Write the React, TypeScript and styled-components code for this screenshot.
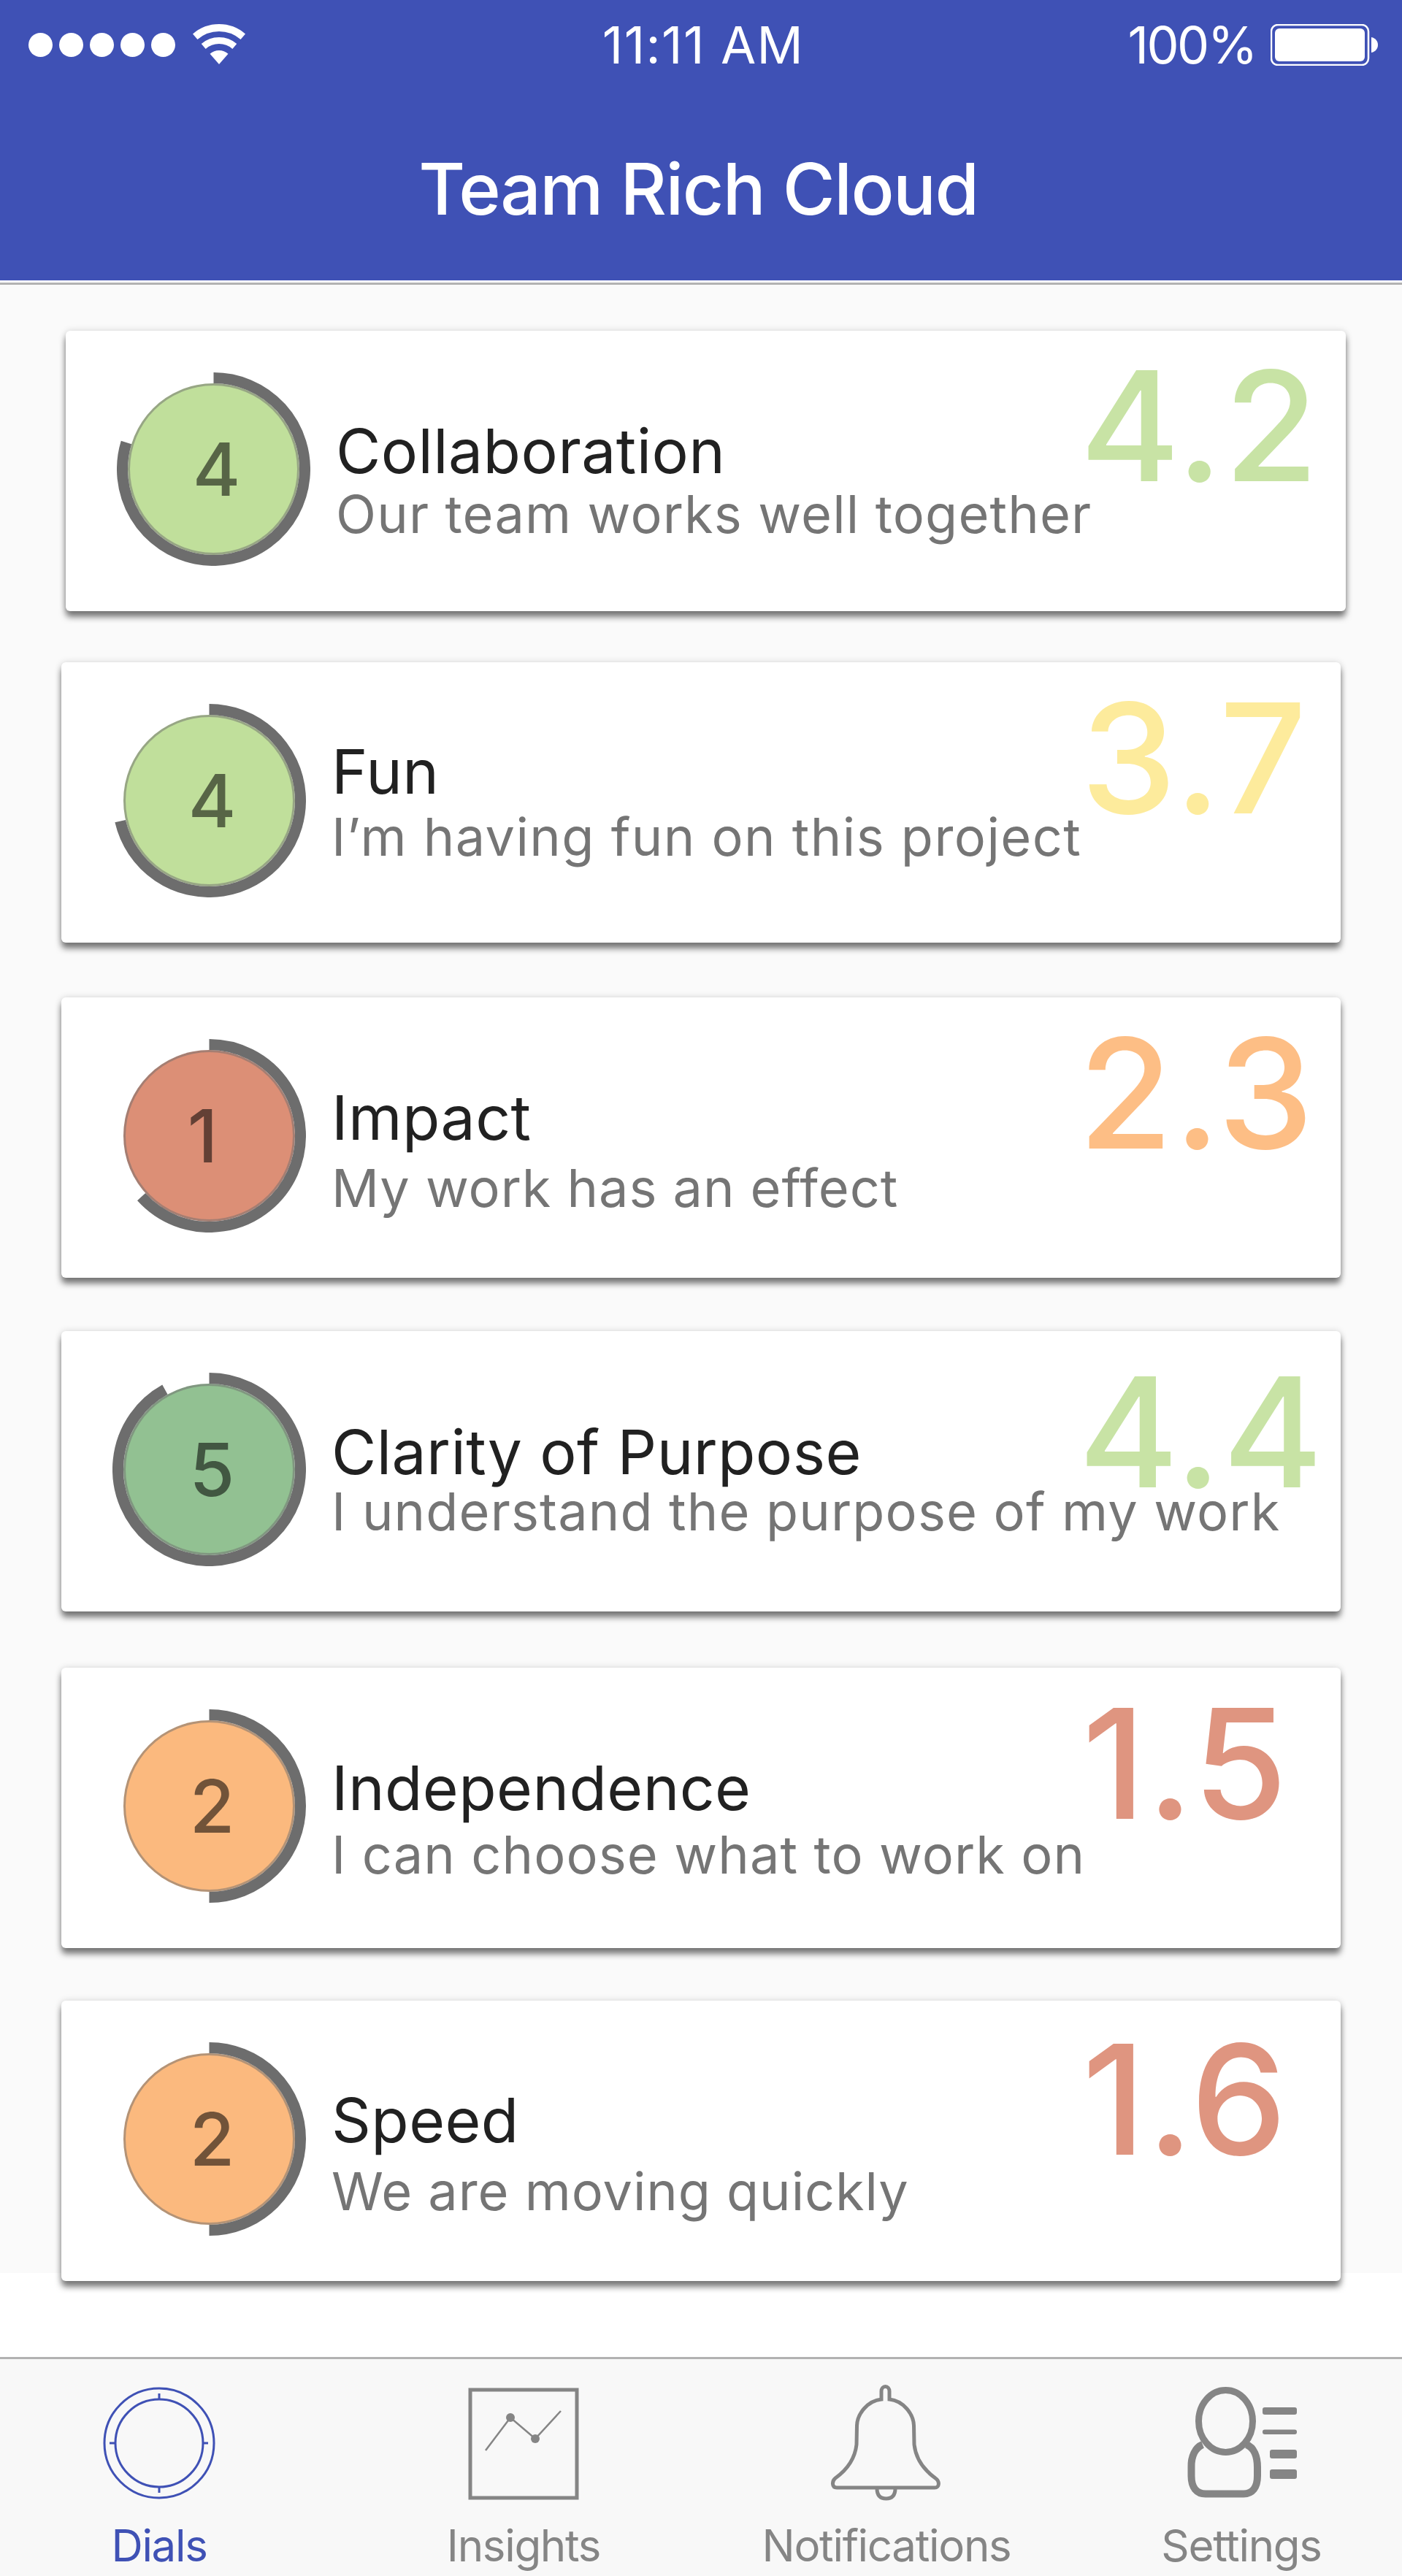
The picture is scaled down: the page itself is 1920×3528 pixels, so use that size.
import styled, { createGlobalStyle } from 'styled-components'

const GlobalStyle = createGlobalStyle`
  html, body {
    margin: 0;
    padding: 0;
    background: #ffffff;
    overflow-x: hidden;
    font-family: 'Inter', 'Liberation Sans', sans-serif;
  }
`

const Page = styled.div`
  width: 1920px;
  height: 3528px;
  overflow: hidden;
  display: flex;
  flex-direction: column;
`
const Header = styled.header`
  height: 384px;
  background: #3f51b5;
  color: #ffffff;
  border-bottom: 3px solid #ffffff;
  box-shadow: 0 3px 0 #b2b2b2;
  flex-shrink: 0;
`
const StatusBar = styled.div`
  display: grid;
  grid-template-columns: 1fr auto 1fr;
  align-items: center;
  height: 57px;
  padding: 33px 33px 0 39px;
`
const Signal = styled.div`
  display: flex;
  align-items: center;
  gap: 9px;
`
const SignalDot = styled.span`
  width: 33px;
  height: 33px;
  border-radius: 50%;
  background: #ffffff;
`
const WifiIcon = styled.svg`
  width: 72px;
  height: 55px;
  margin-left: 15px;
  margin-top: -2px;
`
const StatusText = styled.span<{ $spacing: number }>`
  font-size: 70px;
  line-height: 57px;
  font-weight: 400;
  letter-spacing: ${({ $spacing }) => $spacing}px;
`
const StatusRight = styled.div`
  display: flex;
  justify-content: flex-end;
  align-items: center;
  gap: 20px;
`
const BatteryIcon = styled.svg`
  width: 147px;
  height: 57px;
`
const Title = styled.h1`
  margin: 0;
  padding: 120px 7px 0 0;
  text-align: center;
  font-size: 98px;
  line-height: 97px;
  font-weight: 500;
  letter-spacing: -1.5px;
`
const Content = styled.main`
  height: 2723px;
  margin-top: 3px;
  background: #fafafa;
  flex-shrink: 0;
`
const Card = styled.section<{ $top: number; $left: number; $width: number }>`
  position: relative;
  display: flex;
  align-items: flex-start;
  box-sizing: border-box;
  width: ${({ $width }) => $width}px;
  height: 384px;
  margin-top: ${({ $top }) => $top}px;
  margin-left: ${({ $left }) => $left}px;
  padding: 57px 0 0 70px;
  background: #ffffff;
  border-radius: 6px;
  box-shadow:
    0 8px 8px rgba(0, 0, 0, 0.5),
    0 0 10px rgba(0, 0, 0, 0.15);
`
const Dial = styled.div`
  position: relative;
  display: flex;
  align-items: center;
  justify-content: center;
  width: 265px;
  height: 265px;
  flex-shrink: 0;
`
const DialRing = styled.svg`
  position: absolute;
  inset: 0;
  width: 265px;
  height: 265px;
`
const DialFace = styled.div<{ $color: string }>`
  display: flex;
  align-items: center;
  justify-content: center;
  box-sizing: border-box;
  width: 235px;
  height: 235px;
  border-radius: 50%;
  background: ${({ $color }) => $color};
  border: 3px solid rgba(109, 109, 109, 0.5);
  background-clip: border-box;
`
const DialValue = styled.span<{ $narrow: boolean }>`
  padding: ${({ $narrow }) => ($narrow ? '0 18px 0 0' : '0 0 0 8px')};
  font-size: 100px;
  line-height: 100px;
  font-weight: 500;
  color: rgba(0, 0, 0, 0.55);
`
const CardText = styled.div<{ $top: number }>`
  margin-top: ${({ $top }) => $top}px;
  margin-left: 35px;
`
const CardTitle = styled.h2`
  margin: 0;
  font-size: 84px;
  line-height: 84px;
  font-weight: 400;
  color: #212121;
  letter-spacing: 0.4px;
  white-space: nowrap;
`
const CardSubtitle = styled.p<{ $gap: number; $spacing: number }>`
  margin: ${({ $gap }) => $gap}px 0 0;
  font-size: 72px;
  line-height: 72px;
  font-weight: 400;
  color: #757575;
  letter-spacing: ${({ $spacing }) => $spacing}px;
  white-space: nowrap;
`
const Score = styled.span<{ $top: number; $left: number; $color: string }>`
  position: absolute;
  top: ${({ $top }) => $top}px;
  left: ${({ $left }) => $left}px;
  font-size: 209px;
  line-height: 209px;
  font-weight: 500;
  letter-spacing: 2px;
  color: ${({ $color }) => $color};
`
const TabBar = styled.nav`
  box-sizing: border-box;
  height: 300px;
  margin-top: 115px;
  padding-left: 48px;
  display: flex;
  background: #f8f8f8;
  border-top: 3px solid #b2b2b2;
  flex-shrink: 0;
`
const Tab = styled.div<{ $gap: number; $active?: boolean }>`
  width: 340px;
  margin-left: ${({ $gap }) => $gap}px;
  flex-shrink: 0;
  display: flex;
  flex-direction: column;
  align-items: center;
  color: ${({ $active }) => ($active ? '#3f51b5' : '#858585')};
`
const TabIcon = styled.svg`
  display: block;
  width: 160px;
  height: 160px;
  margin-top: 35px;
  fill: none;
  stroke: currentColor;
`
const TabLabel = styled.span`
  margin-top: 24px;
  font-size: 60px;
  line-height: 72px;
  letter-spacing: -1.3px;
`

const GREEN = '#c0df9b'
const RED = '#dc8f76'
const DEEP_GREEN = '#92c192'
const ORANGE = '#fbb97e'

const dials = [
  { title: 'Collaboration', subtitle: 'Our team works well together', value: 4, score: '4.2', scoreColor: '#c8e3a5', face: GREEN, angle: 287, top: 63, left: 90, width: 1753, textTop: 66, gap: 8, subSpacing: 1.15, scoreTop: 26, scoreLeft: 1389 },
  { title: 'Fun', subtitle: 'I’m having fun on this project', value: 4, score: '3.7', scoreColor: '#fdeb9c', face: GREEN, angle: 257, top: 70, left: 84, width: 1752, textTop: 51, gap: 11, subSpacing: 1.45, scoreTop: 27, scoreLeft: 1396 },
  { title: 'Impact', subtitle: 'My work has an effect', value: 1, score: '2.3', scoreColor: '#fdbe85', face: RED, angle: 228, top: 75, left: 84, width: 1752, textTop: 66, gap: 18, subSpacing: 0.95, scoreTop: 27, scoreLeft: 1393 },
  { title: 'Clarity of Purpose', subtitle: 'I understand the purpose of my work', value: 5, score: '4.4', scoreColor: '#c8e3a5', face: DEEP_GREEN, angle: 331, top: 73, left: 84, width: 1752, textTop: 67, gap: 3, subSpacing: 1.15, scoreTop: 34, scoreLeft: 1393 },
  { title: 'Independence', subtitle: 'I can choose what to work on', value: 2, score: '1.5', scoreColor: '#df9580', face: ORANGE, angle: 180, top: 77, left: 84, width: 1752, textTop: 66, gap: 13, subSpacing: 1.1, scoreTop: 27, scoreLeft: 1398 },
  { title: 'Speed', subtitle: 'We are moving quickly', value: 2, score: '1.6', scoreColor: '#df9580', face: ORANGE, angle: 180, top: 72, left: 84, width: 1752, textTop: 65, gap: 19, subSpacing: 0.95, scoreTop: 31, scoreLeft: 1398 },
]

function ringPath(angle: number) {
  const r = 125
  const rad = (angle * Math.PI) / 180
  const x = 132.5 + r * Math.sin(rad)
  const y = 132.5 - r * Math.cos(rad)
  return `M132.5 7.5 A${r} ${r} 0 ${angle > 180 ? 1 : 0} 1 ${x} ${y}`
}

export default function App() {
  return (
    <Page>
      <GlobalStyle />
      <Header>
        <StatusBar>
          <Signal>
            {[0, 1, 2, 3, 4].map((i) => (
              <SignalDot key={i} />
            ))}
            <WifiIcon viewBox="0 0 72 55">
              <path d="M3.2 17.3 A50 50 0 0 1 68.8 17.3" fill="none" stroke="#fff" strokeWidth="10" />
              <path d="M14.7 30.5 A32.5 32.5 0 0 1 57.3 30.5" fill="none" stroke="#fff" strokeWidth="9" />
              <path d="M36 55 L23.5 40.7 A19 19 0 0 1 48.5 40.7 Z" fill="#fff" />
            </WifiIcon>
          </Signal>
          <StatusText $spacing={1.4}>11:11 AM</StatusText>
          <StatusRight>
            <StatusText $spacing={-2.5}>100%</StatusText>
            <BatteryIcon viewBox="0 0 147 57">
              <rect x="1" y="1" width="133" height="55" rx="9" fill="none" stroke="#fff" strokeWidth="2.5" />
              <rect x="6" y="6" width="123" height="45" rx="6" fill="#fff" />
              <path d="M138 18 C144 19 147 24 147 28.5 C147 33 144 38 138 39 Z" fill="#fff" />
            </BatteryIcon>
          </StatusRight>
        </StatusBar>
        <Title>Team Rich Cloud</Title>
      </Header>
      <Content>
        {dials.map((d) => (
          <Card key={d.title} $top={d.top} $left={d.left} $width={d.width}>
            <Dial>
              <DialRing viewBox="0 0 265 265">
                <path d={ringPath(d.angle)} fill="none" stroke="#6d6d6d" strokeWidth="15" />
              </DialRing>
              <DialFace $color={d.face}>
                <DialValue $narrow={d.value === 1}>{d.value}</DialValue>
              </DialFace>
            </Dial>
            <CardText $top={d.textTop}>
              <CardTitle>{d.title}</CardTitle>
              <CardSubtitle $gap={d.gap} $spacing={d.subSpacing}>
                {d.subtitle}
              </CardSubtitle>
            </CardText>
            <Score $top={d.scoreTop} $left={d.scoreLeft} $color={d.scoreColor}>
              {d.score}
            </Score>
          </Card>
        ))}
      </Content>
      <TabBar>
        <Tab $gap={0} $active>
          <TabIcon viewBox="0 0 160 160">
            <circle cx="80" cy="80" r="75" strokeWidth="3" />
            <circle cx="80" cy="80" r="60" strokeWidth="3" />
            <path d="M80 12 V20 M80 140 V148 M12 80 H20 M140 80 H147" strokeWidth="3" />
          </TabIcon>
          <TabLabel>Dials</TabLabel>
        </Tab>
        <Tab $gap={159}>
          <TabIcon viewBox="0 0 160 160">
            <rect x="7" y="7" width="146" height="148" strokeWidth="5" />
            <path d="M28 90 L62 45 L96 74 L131 36" strokeWidth="2.5" />
            <circle cx="62" cy="45" r="6" fill="currentColor" stroke="none" />
            <circle cx="96" cy="74" r="6" fill="currentColor" stroke="none" />
          </TabIcon>
          <TabLabel>Insights</TabLabel>
        </Tab>
        <Tab $gap={157}>
          <TabIcon viewBox="0 0 150 160">
            <path
              d="M68 20 V9 a5.5 6.5 0 0 1 11 0 V20 C98 22 112 40 112.5 56 L113 82 C115 100 124 115 142 128 C148 132 148 141 141 141 H7 C0 141 0 132 5 128 C23 115 32 100 34 82 L34.5 56 C35 40 49 22 68 20 Z"
              strokeWidth="5"
            />
            <path d="M62 142 C62 152 67 156 74.5 156 C82 156 87 152 87 142" strokeWidth="5" />
          </TabIcon>
          <TabLabel>Notifications</TabLabel>
        </Tab>
        <Tab $gap={146}>
          <TabIcon viewBox="-5 -3 160 160">
            <ellipse cx="53.5" cy="47" rx="37" ry="42.5" strokeWidth="9" />
            <path
              d="M22 79 C12 83 6 95 6.5 110 V122 C6.5 138 14 146.5 26 146.5 H78 C90 146.5 97 138 97 122 V110 C97 95 92 83 82 79"
              strokeWidth="10"
            />
            <rect x="104" y="28" width="47" height="10" rx="3" fill="currentColor" stroke="none" />
            <rect x="104" y="58.5" width="47" height="6.5" rx="3" fill="currentColor" stroke="none" />
            <rect x="114" y="86" width="37" height="12" rx="3" fill="currentColor" stroke="none" />
            <rect x="114" y="113" width="37" height="13" rx="3" fill="currentColor" stroke="none" />
          </TabIcon>
          <TabLabel>Settings</TabLabel>
        </Tab>
      </TabBar>
    </Page>
  )
}
